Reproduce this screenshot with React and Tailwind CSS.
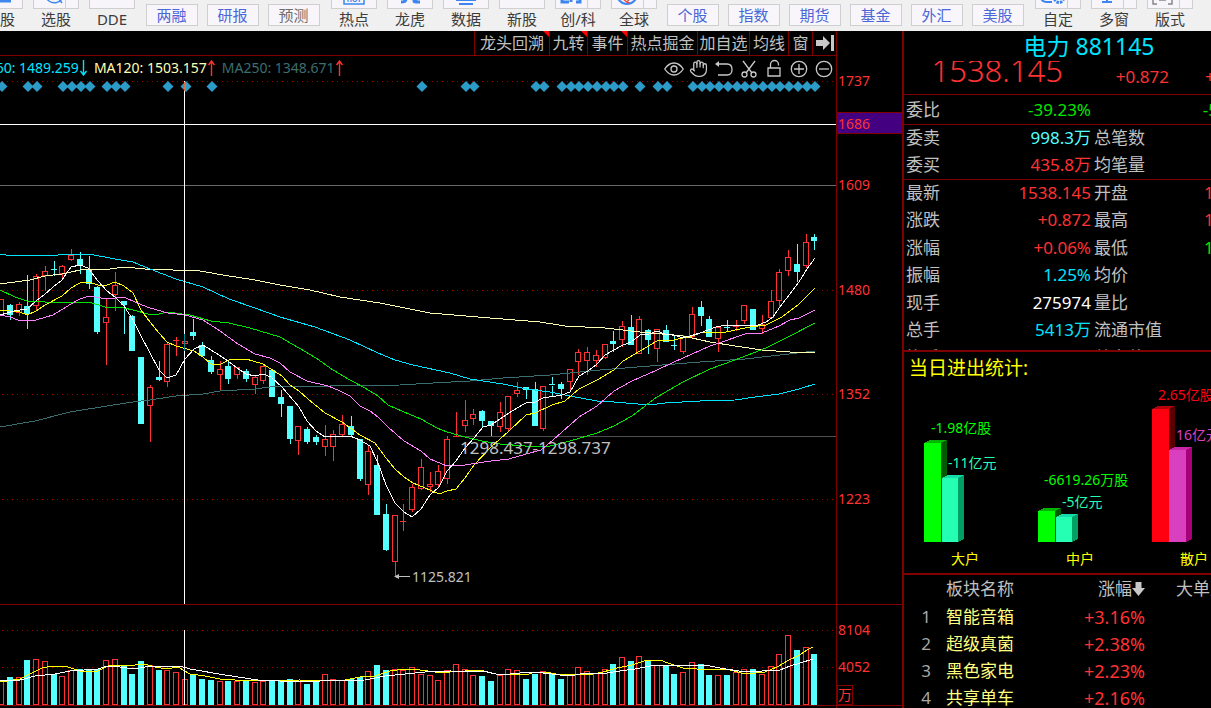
/**
 * MarketTerminal
 *
 * Sector quote screen: toolbar, daily K-line chart with volume,
 * and the quote / money flow / related sector panel on the right.
 */

import React from 'react'
import { Hand } from 'lucide-react'

const RED = '#ff3232'
const CYAN = '#54ffff'
const BLUE = '#3d86f0'

// ---------- toolbar ----------

const TOOLS_LEFT = [
  { label: '选股', icon: 'list' },
  { label: '选股', icon: 'search', split: true },
  { label: 'DDE' },
]

const LINKS_LEFT = [
  { label: '两融' },
  { label: '研报' },
  { label: '预测', muted: true },
]

const TOOLS_MID = [
  { label: '热点', icon: 'hot' },
  { label: '龙虎', icon: 'dragon' },
  { label: '数据', icon: 'data' },
  { label: '新股' },
  { label: '创/科', icon: 'board', split: true },
  { label: '全球', icon: 'globe', split: true },
]

const LINKS_RIGHT = [
  { label: '个股' },
  { label: '指数' },
  { label: '期货' },
  { label: '基金' },
  { label: '外汇' },
  { label: '美股' },
]

const TOOLS_RIGHT = [
  { label: '自定', icon: 'custom', split: true },
  { label: '多窗', icon: 'windows', split: true },
  { label: '版式', icon: 'layout', split: true },
]

function ToolIcon({ name }) {
  return (
    <svg className="w-[44px] h-[28px] shrink-0" viewBox="0 0 44 28" fill="none" stroke={BLUE} strokeWidth="2">
      {name === 'list' && <path d="M12 8h20M12 15h20M22 21h11" strokeWidth="3" />}
      {name === 'search' && <path d="M24 18l4 5M13 8a9 9 0 1 0 15 11" strokeWidth="1.5" />}
      {name === 'hot' && (
        <>
          <path d="M12 13h20v11h-20z" strokeWidth="1.5" />
          <text x="22" y="22" textAnchor="middle" fontSize="7" fontWeight="bold" fill={BLUE} stroke="none">HOT</text>
        </>
      )}
      {name === 'dragon' && <path d="M18 8v11q0 3-5 3M26 8v13q0 1 2 1h4M31 17l-5 4" strokeWidth="3" />}
      {name === 'data' && <path d="M12 14h20M12 20h20M15 24h14" />}
      {name === 'board' && <path d="M6 8v14h7M15 22v-5M20 22h4v-14M8 16h4" strokeWidth="3" />}
      {name === 'globe' && (
        <>
          <circle cx="15" cy="14" r="10" />
          <path d="M8 12q3 10 10 11M15 22l6-7" stroke="#e8504a" strokeWidth="1.5" />
        </>
      )}
      {name === 'custom' && (
        <>
          <path d="M6 14q-3 7 4 8h6" />
          <circle cx="23" cy="18" r="4.5" strokeDasharray="2.5 1" strokeWidth="3" />
        </>
      )}
      {name === 'windows' && <path d="M15 8v14M10 22h10" />}
      {name === 'layout' && <path d="M9 12h-4v12h4M20 12h4v12h-4M11 20h7" stroke="#888888" strokeWidth="1.5" />}
    </svg>
  )
}

function ToolButton({ label, icon, split }) {
  return (
    <button className="w-14 shrink-0 flex flex-col items-center">
      <span className="w-[46px] h-[30px] flex border border-[#cfcfcf] bg-[#f7f5fa] relative overflow-hidden">
        <ToolIcon name={icon} />
        {split && <span className="absolute right-3 inset-y-0 border-l border-[#cfcfcf]" />}
      </span>
      <span className="h-[22px] leading-[20px] text-[15px] text-[#3c3c3c] whitespace-nowrap">{label}</span>
    </button>
  )
}

function LinkButton({ label, muted }) {
  return (
    <div className="w-[61px] h-[27px] shrink-0 flex justify-center">
      <button
        className={`w-[52px] h-[22px] leading-[20px] text-[15px] border border-[#cfcfcf] bg-[#f8f6fb] ${
          muted ? 'text-[#6e6e6e]' : 'text-[#4a66d8]'
        }`}
      >
        {label}
      </button>
    </div>
  )
}

function Toolbar() {
  return (
    <header className="h-[31px] shrink-0 bg-[#f0f0f0] overflow-hidden flex items-end">
      <div className="flex items-end -ml-7">
        {TOOLS_LEFT.map((t, i) => <ToolButton key={i} {...t} />)}
      </div>
      <div className="flex items-end pl-px pr-0.5">
        {LINKS_LEFT.map(t => <LinkButton key={t.label} {...t} />)}
      </div>
      <div className="flex items-end">
        {TOOLS_MID.map(t => <ToolButton key={t.label} {...t} />)}
      </div>
      <div className="flex items-end pr-0.5">
        {LINKS_RIGHT.map(t => <LinkButton key={t.label} {...t} />)}
      </div>
      <div className="flex items-end">
        {TOOLS_RIGHT.map(t => <ToolButton key={t.label} {...t} />)}
      </div>
    </header>
  )
}

// ---------- chart header ----------

const CHART_TABS = [
  { label: '龙头回溯', width: 'w-[75px]', flag: true },
  { label: '九转', width: 'w-[38px]', flag: true },
  { label: '事件', width: 'w-[40px]', flag: true },
  { label: '热点掘金', width: 'w-[70px]' },
  { label: '加自选', width: 'w-[52px]' },
  { label: '均线', width: 'w-[39px]' },
  { label: '窗', width: 'w-[24px]' },
]

const AVERAGES = [
  { text: 'MA60: 1489.259', color: 'text-[#00e4ff]', arrow: '#00e4ff', down: true },
  { text: 'MA120: 1503.157', color: 'text-[#ffffb4]', arrow: RED },
  { text: 'MA250: 1348.671', color: 'text-[#3c6e70]', arrow: RED },
]

function ChartTabs() {
  return (
    <div className="flex">
      <div className="flex-1 h-[25px] flex justify-end border-b border-r border-[#800000]">
        {CHART_TABS.map(t => (
          <button
            key={t.label}
            className={`${t.width} relative shrink-0 flex justify-center border-l border-[#800000] text-base leading-6 text-[#c0c0c0] whitespace-nowrap`}
          >
            {t.label}
            {t.flag && (
              <svg className="absolute right-0 top-0 w-[6px] h-[6px]" viewBox="0 0 6 6">
                <path d="M0 0h6v6z" fill="#ff0000" />
              </svg>
            )}
          </button>
        ))}
        <button aria-label="收起" className="w-[24px] shrink-0 flex items-center justify-center border-l border-[#800000]">
          <svg className="w-[18px] h-[16px]" viewBox="0 0 18 16" fill="#c8c8c8">
            <path d="M0 5h7v-4l7 7-7 7v-4h-7zM15 0h3v16h-3z" />
          </svg>
        </button>
      </div>
      <div className="w-[65px] shrink-0" />
    </div>
  )
}

function DrawTool({ label, children }) {
  return (
    <button aria-label={label} className="w-[25px] h-6 flex items-end justify-center">
      <svg className="w-5 h-[22px]" viewBox="0 0 20 22" fill="none" stroke="#c8c8c8" strokeWidth="1.3">
        {children}
      </svg>
    </button>
  )
}

function IndicatorRow() {
  return (
    <div className="flex">
      <div className="flex-1 min-w-0 h-6 flex justify-between border-r border-[#800000] overflow-hidden">
        <div className="flex gap-[6px] -ml-[26px] text-sm leading-6 whitespace-nowrap">
          {AVERAGES.map(a => (
            <span key={a.text} className={`flex items-center ${a.color}`}>
              {a.text}
              <svg className="w-[9px] h-4" viewBox="0 0 9 16" fill="none" stroke={a.arrow} strokeWidth="1.4">
                {a.down ? <path d="M4.5 0v15M1.5 11l3 4 3-4" /> : <path d="M4.5 16v-15M1.5 5l3-4 3 4" />}
              </svg>
            </span>
          ))}
        </div>
        <div className="flex items-center shrink-0">
          <DrawTool label="显示">
            <path d="M.7 11q4-6 9.3-6t9.3 6q-4 6-9.3 6t-9.3-6z" />
            <circle cx="10" cy="11" r="3" />
          </DrawTool>
          <button aria-label="拖动" className="w-[25px] h-6 flex items-center justify-center">
            <Hand size={19} color="#c8c8c8" strokeWidth={1.6} />
          </button>
          <DrawTool label="撤销">
            <path d="M3 6h10q5 0 5 5.500t-5 5.500h-9" />
            <path d="M1 6l4-3v6z" fill="#c8c8c8" stroke="none" />
          </DrawTool>
          <DrawTool label="剪切">
            <path d="M4 3l9 12M16 3l-9 12" />
            <circle cx="5.500" cy="16.500" r="2.500" />
            <circle cx="14.500" cy="16.500" r="2.500" />
          </DrawTool>
          <DrawTool label="锁定">
            <path d="M4 10h12v8h-12zM6.500 10v-3.500a4 4 0 0 1 8 0v1" />
          </DrawTool>
          <DrawTool label="放大">
            <circle cx="10" cy="11" r="7.700" />
            <path d="M5 11h10M10 6v10" />
          </DrawTool>
          <DrawTool label="缩小">
            <circle cx="10" cy="11" r="7.700" />
            <path d="M5 11h10" />
          </DrawTool>
        </div>
      </div>
      <div className="w-[65px] shrink-0" />
    </div>
  )
}

// ---------- chart ----------

// [rising, body top, body bottom, high, low, volume top]
const CANDLES = [
  [1, 299, 315, 299, 315, 680], [0, 305, 315, 304, 320, 677], [1, 304, 313, 302, 316, 677],
  [0, 306, 314, 275, 329, 660], [1, 276, 306, 274, 310, 659], [1, 271, 276, 266, 291, 661],
  [0, 269, 270, 261, 276, 674], [1, 266, 274, 265, 279, 676], [1, 255, 260, 249, 261, 670],
  [0, 259, 265, 252, 274, 669], [0, 269, 284, 256, 289, 669], [0, 287, 332, 286, 334, 669],
  [1, 317, 323, 299, 365, 660], [1, 285, 295, 272, 311, 659], [0, 301, 305, 301, 334, 665],
  [0, 316, 351, 315, 351, 674], [0, 357, 424, 357, 424, 661], [1, 387, 406, 385, 442, 665],
  [0, 377, 380, 361, 381, 670], [1, 344, 382, 343, 387, 670], [1, 340, 341, 337, 356, 672],
  [1, 341, 344, 341, 344, 679], [0, 332, 336, 319, 340, 674], [0, 345, 356, 342, 356, 679],
  [0, 360, 372, 356, 374, 680], [1, 369, 375, 361, 390, 681], [0, 366, 379, 362, 384, 681],
  [1, 367, 375, 367, 379, 681], [0, 371, 379, 369, 382, 680], [1, 377, 385, 375, 394, 682],
  [1, 366, 381, 365, 384, 681], [0, 370, 397, 370, 397, 681], [0, 397, 404, 390, 417, 681],
  [0, 406, 439, 406, 444, 679], [1, 426, 441, 426, 455, 681], [0, 429, 442, 427, 444, 684],
  [0, 437, 442, 435, 445, 681], [1, 439, 447, 425, 456, 674], [1, 434, 447, 430, 461, 679],
  [1, 424, 435, 415, 436, 680], [0, 426, 435, 416, 436, 679], [0, 439, 479, 439, 481, 677],
  [1, 451, 485, 446, 495, 671], [0, 465, 515, 455, 515, 665], [0, 514, 550, 504, 551, 670],
  [1, 515, 562, 515, 577, 669], [1, 521, 522, 504, 531, 670], [1, 487, 510, 484, 512, 667],
  [1, 467, 489, 459, 490, 674], [1, 484, 487, 472, 492, 675], [1, 471, 485, 465, 487, 680],
  [1, 439, 479, 436, 484, 670], [1, 436, 438, 412, 438, 664], [1, 420, 426, 400, 432, 669],
  [1, 414, 419, 409, 425, 675], [0, 411, 421, 410, 427, 676], [0, 421, 426, 421, 436, 681],
  [1, 412, 427, 402, 432, 675], [1, 396, 429, 396, 431, 669], [1, 390, 394, 382, 397, 670],
  [0, 387, 390, 387, 399, 679], [0, 389, 426, 382, 426, 674], [1, 386, 429, 386, 431, 671],
  [0, 384, 386, 377, 396, 674], [0, 384, 389, 382, 399, 679], [1, 369, 382, 369, 390, 675],
  [1, 352, 362, 349, 375, 667], [1, 352, 361, 347, 375, 671], [1, 355, 361, 350, 367, 673],
  [1, 344, 358, 344, 359, 669], [0, 341, 344, 331, 352, 664], [1, 326, 340, 321, 347, 657],
  [0, 327, 345, 315, 345, 661], [1, 319, 354, 316, 354, 656], [0, 330, 340, 329, 354, 660],
  [1, 329, 349, 329, 362, 665], [0, 330, 342, 325, 342, 665], [0, 345, 346, 336, 350, 674],
  [1, 337, 352, 335, 354, 672], [1, 314, 337, 307, 338, 662], [0, 307, 316, 301, 326, 664],
  [0, 319, 337, 316, 337, 675], [1, 327, 339, 327, 352, 675], [0, 327, 328, 320, 331, 675],
  [1, 326, 327, 320, 331, 672], [1, 305, 321, 305, 324, 669], [0, 309, 330, 309, 330, 669],
  [1, 324, 329, 315, 334, 674], [1, 301, 318, 290, 318, 666], [1, 272, 301, 269, 307, 654],
  [1, 257, 271, 250, 276, 635], [0, 264, 272, 244, 282, 650], [1, 242, 266, 234, 268, 647],
  [0, 237, 241, 234, 250, 654],
]

const candleX = i => Math.floor(1.6 + i * 8.745)

// candle indexes that carry an event marker
const MARKERS = [
  0, 3, 4, 7, 8, 9, 10, 12, 13, 14, 19, 21, 24, 48, 53, 54, 61, 62,
  64, 65, 66, 67, 68, 69, 70, 71, 73, 75, 76,
  79, 80, 81, 82, 83, 84, 85, 86, 87, 88, 89, 90, 91, 92, 93,
]

const LINES = [
  { // MA250
    color: '#3c6e70',
    points: '0,427 35,421 70,412 107,406 133,402 150,400 176,396 203,394 220,391 255,389 270,387 330,386 400,385 433,383 470,381 503,378 550,375 600,370 650,366 700,362 745,359 780,355 815,351',
  },
  { // MA120
    color: '#ffffb4',
    points: '0,284 30,280 45,276 62,274 80,270 110,269 125,267 145,269 200,271 229,276 255,280 280,285 310,290 340,297 380,303 430,313 490,318 540,322 565,326 605,328 640,332 683,336 710,342 735,346 762,350 790,352 815,352',
  },
  { // MA60
    color: '#00e4ff',
    points: '0,254 6,255 58,255 60,254 89,254 115,259 133,262 150,269 176,279 203,287 229,299 255,308 280,317 315,327 350,340 378,353 395,360 413,365 450,373 470,379 503,384 527,389 550,392 570,396 597,401 614,402 650,405 665,403 700,401 735,400 755,397 779,394 799,389 815,384',
  },
  { // MA30
    color: '#00e600',
    points: '0,290 15,297 27,301 45,302 89,302 105,307 124,308 133,310 148,314 159,314 167,312 190,315 211,321 229,323 250,328 280,337 299,348 316,358 333,370 350,380 365,388 378,396 388,405 404,412 421,419 437,428 447,432 465,437 482,441 500,444 525,446 550,446 570,441 597,433 614,426 632,416 645,406 657,397 683,382 710,369 735,360 766,348 790,336 815,323',
  },
  { // MA20
    color: '#ff80ff',
    points: '0,315 10,317 18,320 36,320 53,315 71,304 80,299 89,296 107,299 124,297 137,303 150,308 168,313 185,315 203,320 220,331 238,344 255,354 270,358 280,363 290,372 307,381 328,386 340,391 350,396 360,406 370,411 378,417 388,427 404,441 421,451 430,459 447,466 465,465 491,461 509,459 526,454 541,450 553,440 579,417 597,406 614,391 632,381 657,370 674,362 692,354 710,346 722,342 745,334 762,333 779,326 790,320 799,318 815,310',
  },
  { // MA10
    color: '#ffff00',
    points: '0,310 20,312 27,315 36,311 45,305 62,296 71,288 80,283 89,282 98,285 107,285 115,282 124,286 133,293 141,310 150,322 159,333 167,342 176,346 194,351 203,357 211,364 219,365 229,360 246,359 263,364 282,376 290,385 299,391 308,399 325,413 342,422 360,435 375,443 386,458 395,469 404,477 413,483 430,490 439,494 447,491 456,489 465,478 474,465 491,447 509,431 526,415 535,413 552,405 565,401 579,389 597,380 614,370 623,361 640,351 657,341 674,340 692,336 703,332 722,333 735,330 750,327 766,325 782,317 799,304 815,288',
  },
  { // MA5
    color: '#ffffff',
    points: '0,315 14,311 27,309 36,301 44,295 53,287 62,280 71,267 80,265 88,268 98,281 107,291 115,297 124,306 133,320 141,336 150,353 159,370 167,378 176,375 185,359 194,349 203,345 211,350 219,355 228,361 237,368 246,374 255,376 263,374 271,377 282,387 299,407 307,421 316,431 325,437 350,436 360,440 370,446 378,463 386,485 395,503 404,512 412,517 421,509 430,495 439,487 447,471 456,461 465,448 474,438 483,427 491,425 500,419 509,413 517,408 526,403 535,402 543,398 562,395 570,392 579,376 588,371 597,364 605,355 614,350 623,345 631,342 640,335 649,334 657,331 665,334 674,335 683,338 700,333 708,330 716,327 726,325 758,325 766,322 773,317 782,304 790,294 799,282 807,269 815,258',
  },
  { // volume MA5
    color: '#ffff00',
    points: '0,682 20,679 30,674 42,668 52,666 68,667 80,671 98,671 108,666 115,665 135,665 145,664 155,667 167,669 178,667 190,674 205,676 220,679 250,681 300,680 320,681 345,680 360,677 375,676 390,671 405,669 420,670 435,672 450,672 480,670 500,675 518,674 526,675 532,673 547,672 560,675 593,674 603,672 617,668 632,665 647,660 660,660 668,663 683,668 697,669 730,670 745,674 765,672 777,667 789,660 798,656 807,650 813,647',
  },
  { // volume MA10
    color: '#ffffff',
    points: '0,680 20,680 35,676 55,674 70,671 98,669 107,666 120,667 133,669 145,667 160,666 180,666 190,669 225,675 258,680 280,681 320,681 365,680 385,676 405,674 425,672 450,671 487,672 500,675 520,673 535,672 560,675 575,675 585,673 600,674 620,671 635,669 655,665 705,665 720,668 745,672 780,670 790,666 800,663 813,659',
  },
]

const GRID = [81, 290, 394, 499, 630, 667]

const AXIS_LABELS = [
  [1737, 81], [1686, 124], [1609, 185], [1480, 290], [1352, 394], [1223, 499], [8104, 630], [4052, 667],
]

function Candle({ i, data }) {
  const [up, top, bottom, high, low, vol] = data
  const x = candleX(i)
  const flat = bottom - top < 3
  const color = up ? RED : CYAN
  return (
    <g stroke={color} fill={up ? 'none' : color}>
      {high < top && <path d={`M${x + 0.5} ${high}V${top}`} />}
      {low > bottom && <path d={`M${x + 0.5} ${bottom}V${low}`} />}
      {flat
        ? <path d={`M${x - 3} ${top + 0.5}h6`} />
        : <rect x={x - 2.5} y={top + 0.5} width="5" height={bottom - top - 1} />}
      <rect x={x - 2.5} y={vol + 0.5} width="5" height={704 - vol} />
    </g>
  )
}

function KLineChart() {
  return (
    <svg className="block w-full h-auto overflow-visible" viewBox="0 80 902 628">
      <g shapeRendering="crispEdges" fill="none">
        {GRID.map(y => (
          <path key={y} d={`M0 ${y + 0.5}H836`} stroke="#a00000" strokeDasharray="1 4" strokeDashoffset="-2" />
        ))}
        <path d="M836.5 80V708M0 604.5H902M0 705.5H902" stroke="#800000" />
        <path d="M0 185.5H836" stroke="#686868" />
        <path d="M455 436.5H836" stroke="#505050" />
        {CANDLES.map((c, i) => <Candle key={i} i={i} data={c} />)}
        {LINES.map((l, i) => <polyline key={i} points={l.points} stroke={l.color} />)}
        <path d="M0 124.5H836M184.5 81V604M184.5 630V705" stroke="#ffffff" />
        <path d="M184.5 334V351" stroke="#008c8c" />
        <rect x="837" y="113" width="65" height="20" fill="#430080" />
        <path d="M837 112.5H902M837 133.5H902M837.5 685.500H852.5V704.5H837.5z" stroke="#800000" />
      </g>
      <g fill="#2d9bc8">
        {MARKERS.map(i => {
          const x = candleX(i) + 1
          return <path key={i} d={`M${x - 5.5} 86.500L${x} 81L${x + 5.5} 86.500L${x} 92z`} />
        })}
      </g>
      <path d="M184 82h2v9h-2z" fill="#e06a3a" />
      <path d="M398 576.5H410" stroke="#c0c0c0" />
      <path d="M394 576.500l5-2.500v5z" fill="#c0c0c0" />
      <g fill="#c0c0c0">
        <text x="460" y="454" fontSize="17">1298.437-1298.737</text>
        <text x="412" y="582" fontSize="14">1125.821</text>
      </g>
      <g fill={RED} fontSize="14">
        {AXIS_LABELS.map(([v, y]) => <text key={v} x="838" y={y + 5}>{v}</text>)}
        <text x="838" y="700">万</text>
      </g>
    </svg>
  )
}

// ---------- side panel ----------

const QUOTES = [
  ['最新', '1538.145', 'text-[#ff3232]', '开盘', '1', 'text-[#ff3232]'],
  ['涨跌', '+0.872', 'text-[#ff3232]', '最高', '1', 'text-[#ff3232]'],
  ['涨幅', '+0.06%', 'text-[#ff3232]', '最低', '1', 'text-[#00e600]'],
  ['振幅', '1.25%', 'text-[#00e4ff]', '均价'],
  ['现手', '275974', 'text-white', '量比'],
  ['总手', '5413万', 'text-[#00e4ff]', '流通市值'],
  ['换手', '', '', '总市值'],
]

const ORDERS = [
  ['委卖', '998.3万', 'text-[#54ffff]', '总笔数'],
  ['委买', '435.8万', 'text-[#ff3232]', '均笔量'],
]

function QuoteRow({ row }) {
  const [label, value, color, label2, value2, color2] = row
  return (
    <div className="grid grid-cols-2 items-start">
      <div className="flex justify-between pl-[2px]">
        <span>{label}</span>
        <span className={color}>{value}</span>
      </div>
      <div className="flex justify-between pl-[3px]">
        <span>{label2}</span>
        <span className={`w-[74px] ${color2 || ''}`}>{value2}</span>
      </div>
    </div>
  )
}

const FLOW_BARS = [
  { x: 924, w: 17, y: 443, front: '#00ff00', top: '#00b400', side: '#005a00' },
  { x: 942, w: 16, y: 478, front: '#24ffb4', top: '#14dcaa', side: '#00a064' },
  { x: 1038, w: 17, y: 511, front: '#00ff00', top: '#00b400', side: '#005a00' },
  { x: 1056, w: 16, y: 517, front: '#24ffb4', top: '#14dcaa', side: '#00a064' },
  { x: 1152, w: 17, y: 409, front: '#ff0010', top: '#b4000a', side: '#5a0000' },
  { x: 1169, w: 17, y: 450, front: '#d840c0', top: '#c828a8', side: '#a80078' },
]

const FLOW_LABELS = [
  ['-1.98亿股', 931, 433, '#00ff00'],
  ['-11亿元', 948, 468, '#24ffb4'],
  ['-6619.26万股', 1044, 485, '#00ff00'],
  ['-5亿元', 1062, 507, '#24ffb4'],
  ['2.65亿股', 1158, 400, '#ff0010'],
  ['16亿元', 1176, 440, '#d840c0'],
  ['大户', 951, 564, '#ffff00'],
  ['中户', 1066, 564, '#ffff00'],
  ['散户', 1180, 564, '#ffff00'],
]

function FlowChart() {
  return (
    <svg className="block w-[374px] h-[189px]" viewBox="904 384 374 189">
      {FLOW_BARS.map(b => (
        <g key={b.x} shapeRendering="crispEdges">
          <path d={`M${b.x + b.w} ${b.y}l6 -3V539l-6 3z`} fill={b.side} />
          <path d={`M${b.x} ${b.y}l6 -3h${b.w}l-6 3z`} fill={b.top} />
          <rect x={b.x} y={b.y} width={b.w} height={542 - b.y} fill={b.front} />
        </g>
      ))}
      {FLOW_LABELS.map(([text, x, y, color]) => (
        <text key={text} x={x} y={y} fontSize="14" fill={color}>{text}</text>
      ))}
    </svg>
  )
}

const SECTORS = [
  ['智能音箱', '+3.16%'],
  ['超级真菌', '+2.38%'],
  ['黑色家电', '+2.23%'],
  ['共享单车', '+2.16%'],
]

function SectorTable() {
  return (
    <table className="table-fixed w-[374px] text-[17px] leading-[26px] text-[#c0c0c0]">
      <thead>
        <tr className="h-[28px]">
          <th className="w-[42px]" />
          <th className="w-[70px] p-0 font-normal text-left">板块名称</th>
          <th className="w-[129px] p-0 font-normal">
            <button className="w-full flex justify-end items-center">
              涨幅
              <svg className="w-[13px] h-[14px]" viewBox="0 0 13 14" fill="#c8c8c8">
                <path d="M3.500 0h6v6h3.500l-6.500 8l-6.500-8h3.500z" />
              </svg>
            </button>
          </th>
          <th className="p-0 pl-[31px] font-normal text-left">大单净量</th>
        </tr>
      </thead>
      <tbody>
        {SECTORS.map(([name, change], i) => (
          <tr key={name} className="h-[27px]">
            <td className="p-0 pr-[15px] text-right text-[#a8a8a8]">{i + 1}</td>
            <td className="p-0 text-[#ffff80]">{name}</td>
            <td className="p-0 text-right text-lg leading-[26px] text-[#ff3232]">{change}</td>
            <td />
          </tr>
        ))}
      </tbody>
    </table>
  )
}

function SidePanel() {
  return (
    <aside className="w-[309px] shrink-0 border-l-2 border-[#800000] overflow-hidden text-[17px] leading-[26px] text-[#c0c0c0]">
      <div className="w-[374px]">
        <h1 className="h-[30px] pr-1 text-[23px] leading-[30px] text-center text-[#00e4ff]">电力 881145</h1>
        <div className="h-[33px] overflow-hidden flex items-end text-[#ff3232]">
          <span className="w-[159px] text-right text-[31px] leading-[48px] font-light">1538.145</span>
          <span className="w-[106px] leading-[34px] text-right">+0.872</span>
          <span className="flex-1 pl-9 leading-[34px]">+</span>
        </div>
        <div className="h-[30px] border-t border-[#800000] grid grid-cols-2 items-center text-[#00e600]">
          <div className="flex justify-between pl-[2px]">
            <span className="text-[#c0c0c0]">委比</span>
            <span>-39.23%</span>
          </div>
          <span className="text-right pr-[60px]">-5</span>
        </div>
        <div className="h-[55px] border-t border-[#800000] grid grid-rows-2">
          {ORDERS.map(r => <QuoteRow key={r[0]} row={r} />)}
        </div>
        <div className="h-[171px] border-t border-[#800000] overflow-hidden">
          <div className="h-[192px] grid grid-rows-7">
            {QUOTES.map(r => <QuoteRow key={r[0]} row={r} />)}
          </div>
        </div>
        <div className="border-t-2 border-[#800000]">
          <h2 className="h-8 pl-[5px] text-[19px] leading-[32px] text-[#ffff00]">当日进出统计:</h2>
          <FlowChart />
        </div>
        <div className="border-t-2 border-[#800000]">
          <SectorTable />
        </div>
      </div>
    </aside>
  )
}

export default function App() {
  return (
    <div className="h-screen overflow-hidden flex flex-col bg-black font-['Noto_Sans','Noto_Sans_CJK_SC',sans-serif]">
      <Toolbar />
      <div className="flex-1 min-h-0 flex">
        <main className="flex-1 min-w-0">
          <ChartTabs />
          <IndicatorRow />
          <KLineChart />
        </main>
        <SidePanel />
      </div>
    </div>
  )
}
